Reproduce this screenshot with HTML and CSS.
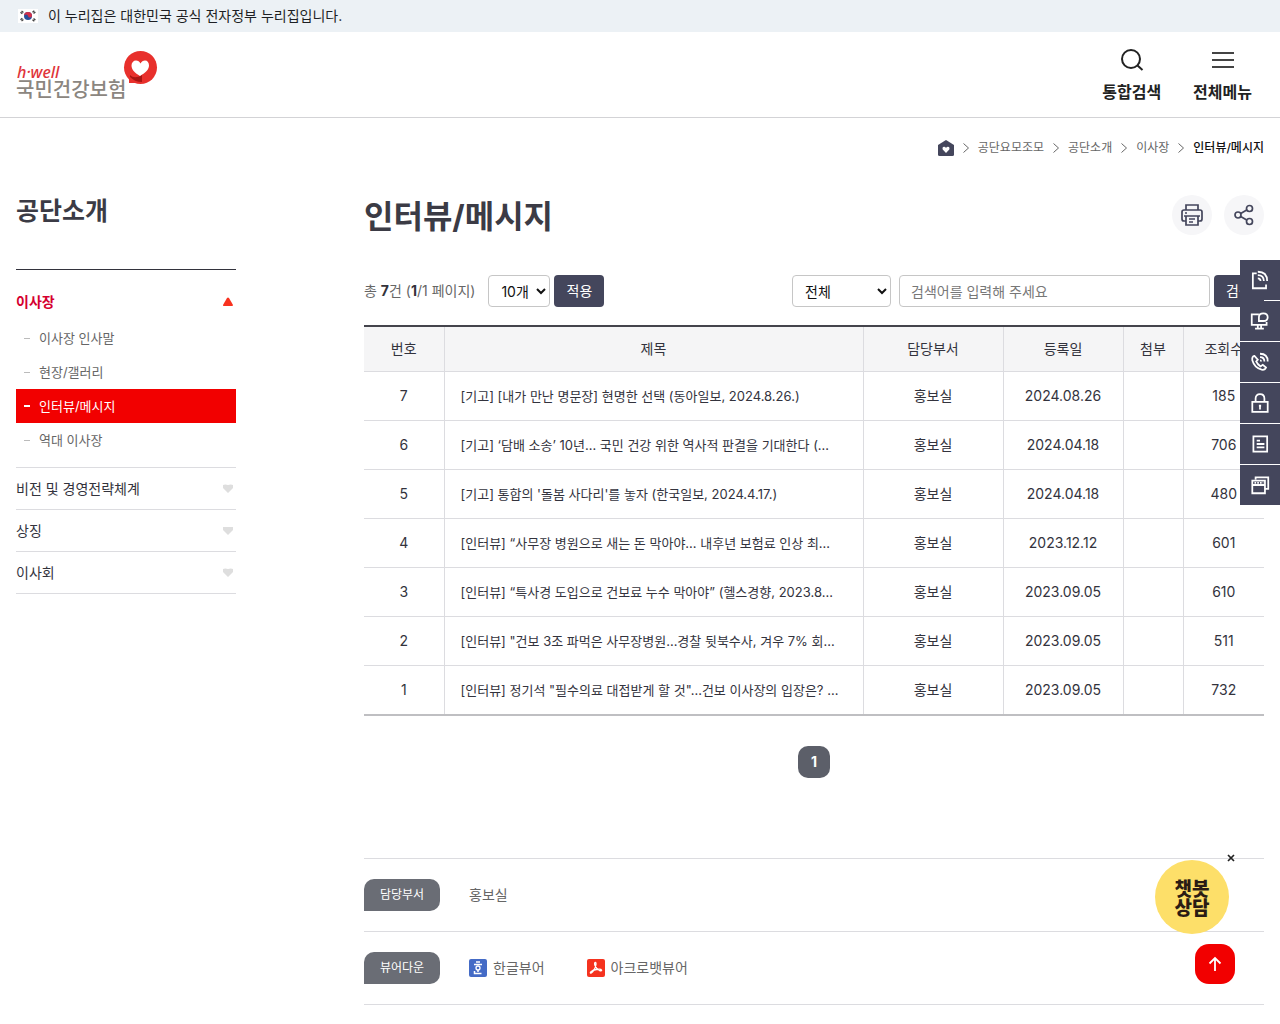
FILE: index.html
```html
<!DOCTYPE html>
<html lang="ko">
<head>
<meta charset="utf-8">
<meta name="viewport" content="width=device-width, initial-scale=1">
<title>인터뷰/메시지 | 국민건강보험</title>
<link rel="stylesheet" href="styles.css">
</head>
<body>
<div class="gov-banner">
  <svg class="flag" viewBox="0 0 20 14" aria-hidden="true">
    <rect width="20" height="14" fill="#fff"/>
    <circle cx="10" cy="7" r="4" fill="#27509b"/>
    <path d="M6 7a4 4 0 0 1 8 0q-.3 1.500-2 1.500T10 7 8 5.500 6 7Z" fill="#d2304a"/>
    <path d="M3 4.500 5 2M15 2l2 2.500M3 9.500 5 12M15 12l2-2.500" stroke="#444" stroke-width="2.400" stroke-dasharray="1.300 .4"/>
  </svg>
  <span>이 누리집은 대한민국 공식 전자정부 누리집입니다.</span>
</div>

<header class="site-header">
  <a class="logo" href="#" aria-label="국민건강보험 홈">
    <svg width="142" height="52" viewBox="0 0 142 52">
      <circle cx="124.500" cy="17.500" r="16.500" fill="#e8302c"/>
      <path d="M113 25v8h12Z" fill="#e8302c"/>
      <path d="M114 25c3 3 7 3 12 0v7c-5 0-9-2-12-5Z" fill="#a81512"/>
      <path d="M124 26c-5-3-8.500-6-8.500-10.500 0-3 2-5 4.500-5 2 0 3.500 1 4.500 3 1-2 2.500-3 4.500-3 2.500 0 4 2 4 5 0 4.500-4 7.500-9 10.500Z" fill="#fff"/>
      <text x="1" y="28" class="logo-en">h·well</text>
      <text x="0" y="47" class="logo-ko">국민건강보험</text>
    </svg>
  </a>
  <nav class="header-tools" aria-label="주요 도구">
    <button type="button" class="tool">
      <svg width="24" height="24" viewBox="0 0 24 24" fill="none" stroke="#222" stroke-width="2"><circle cx="11" cy="11" r="9"/><path d="m17.500 17.500 5 4.500"/></svg>
      <span>통합검색</span>
    </button>
    <button type="button" class="tool">
      <svg width="24" height="24" viewBox="0 0 24 24" stroke="#444" stroke-width="2"><path d="M1 5h22M1 12h22M1 19h22"/></svg>
      <span>전체메뉴</span>
    </button>
  </nav>
</header>

<nav class="breadcrumb" aria-label="현재 위치">
  <a href="#" aria-label="홈"><svg width="16" height="16" viewBox="0 0 16 16"><path d="M0 5 8 0l8 5v9.500q0 1.500-1.500 1.500h-13Q0 16 0 14.500Z" fill="#44465c"/><path d="M8 13 4.700 9.500Q4 7 6 6.700 7.400 6.700 8 8 8.600 6.700 10 6.700 12 7 11.300 9.500Z" fill="#fff"/></svg></a>
  <svg class="sep" viewBox="0 0 6 10"><path d="m.5.5 5 4.500-5 4.500"/></svg>
  <a href="#">공단요모조모</a>
  <svg class="sep" viewBox="0 0 6 10"><path d="m.5.5 5 4.500-5 4.500"/></svg>
  <a href="#">공단소개</a>
  <svg class="sep" viewBox="0 0 6 10"><path d="m.5.5 5 4.500-5 4.500"/></svg>
  <a href="#">이사장</a>
  <svg class="sep" viewBox="0 0 6 10"><path d="m.5.5 5 4.500-5 4.500"/></svg>
  <a href="#" class="current" aria-current="page">인터뷰/메시지</a>
</nav>

<div class="layout">
  <aside class="sidebar">
    <h2>공단소개</h2>
    <ul class="menu">
      <li class="open">
        <a class="menu-link" href="#">이사장 <svg width="12" height="10" viewBox="0 0 12 10"><path d="M5 1q1-1 2 0l4 7q0 1-1 1H2Q.500 9 1 8Z" fill="#f8321f"/></svg></a>
        <ul class="submenu">
          <li><a href="#">이사장 인사말</a></li>
          <li><a href="#">현장/갤러리</a></li>
          <li><a href="#" class="active">인터뷰/메시지</a></li>
          <li><a href="#">역대 이사장</a></li>
        </ul>
      </li>
      <li><a class="menu-link" href="#">비전 및 경영전략체계 <svg width="12" height="10" viewBox="0 0 12 10"><path d="M1 1q2-1 5 0 3-1 5 0v3L6 9 1 4Z" fill="#dedede"/></svg></a></li>
      <li><a class="menu-link" href="#">상징 <svg width="12" height="10" viewBox="0 0 12 10"><path d="M1 1h10v3L6 9 1 4Z" fill="#dedede"/></svg></a></li>
      <li><a class="menu-link" href="#">이사회 <svg width="12" height="10" viewBox="0 0 12 10"><path d="M1 1q2-1 5 0 3-1 5 0v3L6 9 1 4Z" fill="#dedede"/></svg></a></li>
    </ul>
  </aside>

  <main class="content">
    <div class="title-row">
      <h1>인터뷰/메시지</h1>
      <div class="page-tools">
        <button type="button" aria-label="인쇄"><svg width="24" height="24" viewBox="0 0 24 24" fill="none" stroke="#44465c" stroke-width="1.700"><path d="M6 7V2h12v5M6 18H4q-2 0-2-2V9q0-2 2-2h16q2 0 2 2v7q0 2-2 2h-2"/><path d="M4 13h16M6 13v9h12v-9M9 16h6M9 19h4M5 10h2"/></svg></button>
        <button type="button" aria-label="공유"><svg width="24" height="24" viewBox="0 0 24 24" fill="none" stroke="#44465c" stroke-width="1.700"><circle cx="6" cy="12" r="3"/><circle cx="17.500" cy="5.500" r="3"/><circle cx="17.500" cy="18.500" r="3"/><path d="m8.700 10.500 6-3.500M8.700 13.500l6 3.500"/></svg></button>
      </div>
    </div>

    <div class="list-bar">
      <form class="per-page">
        <p>총 <b>7</b>건 (<b>1</b>/1 페이지)</p>
        <select aria-label="목록 개수"><option>10개</option></select>
        <button type="button" class="btn">적용</button>
      </form>
      <form class="search">
        <select aria-label="검색 구분"><option>전체</option></select>
        <input type="text" aria-label="검색어" placeholder="검색어를 입력해 주세요">
        <button type="button" class="btn">검색</button>
      </form>
    </div>

    <table class="board">
      <colgroup><col class="c-num"><col><col class="c-dept"><col class="c-date"><col class="c-file"><col class="c-hits"></colgroup>
      <thead><tr><th>번호</th><th>제목</th><th>담당부서</th><th>등록일</th><th>첨부</th><th>조회수</th></tr></thead>
      <tbody>
        <tr><td>7</td><td><a href="#">[기고] [내가 만난 명문장] 현명한 선택 (동아일보, 2024.8.26.)</a></td><td>홍보실</td><td>2024.08.26</td><td></td><td>185</td></tr>
        <tr><td>6</td><td><a href="#">[기고] ‘담배 소송’ 10년… 국민 건강 위한 역사적 판결을 기대한다 (…</a></td><td>홍보실</td><td>2024.04.18</td><td></td><td>706</td></tr>
        <tr><td>5</td><td><a href="#">[기고] 통합의 '돌봄 사다리'를 놓자 (한국일보, 2024.4.17.)</a></td><td>홍보실</td><td>2024.04.18</td><td></td><td>480</td></tr>
        <tr><td>4</td><td><a href="#">[인터뷰] “사무장 병원으로 새는 돈 막아야… 내후년 보험료 인상 최…</a></td><td>홍보실</td><td>2023.12.12</td><td></td><td>601</td></tr>
        <tr><td>3</td><td><a href="#">[인터뷰] “특사경 도입으로 건보료 누수 막아야” (헬스경향, 2023.8…</a></td><td>홍보실</td><td>2023.09.05</td><td></td><td>610</td></tr>
        <tr><td>2</td><td><a href="#">[인터뷰] "건보 3조 파먹은 사무장병원…경찰 뒷북수사, 겨우 7% 회…</a></td><td>홍보실</td><td>2023.09.05</td><td></td><td>511</td></tr>
        <tr><td>1</td><td><a href="#">[인터뷰] 정기석 "필수의료 대접받게 할 것"…건보 이사장의 입장은? …</a></td><td>홍보실</td><td>2023.09.05</td><td></td><td>732</td></tr>
      </tbody>
    </table>

    <nav class="pagination" aria-label="페이지"><a href="#" aria-current="page">1</a></nav>

    <dl class="page-info">
      <div><dt>담당부서</dt><dd>홍보실</dd></div>
      <div>
        <dt>뷰어다운</dt>
        <dd>
          <a href="#"><svg width="18" height="18" viewBox="0 0 18 18"><rect width="18" height="18" rx="2" fill="#446bc6"/><path d="M7 3h4M5 5.500h8M9 11v2M5.500 12v2.500h7" fill="none" stroke="#fff" stroke-width="1.500"/><circle cx="9" cy="9" r="2" fill="none" stroke="#fff" stroke-width="1.300"/></svg>한글뷰어</a>
          <a href="#"><svg width="18" height="18" viewBox="0 0 18 18"><rect width="18" height="18" rx="2" fill="#f5331f"/><path d="M8.500 3.500q-1.500 0-.5 3 1.300 3.500 4.500 5 2.500.700 2-.500-.500-1.200-5-.500-3.500.5-5.500 2.200-1.300 1.600 0 1.300 1.800-.5 4-5Q9.800 3.800 8.500 3.500Z" fill="none" stroke="#fff" stroke-width="1.300"/></svg>아크로뱃뷰어</a>
        </dd>
      </div>
    </dl>
  </main>
</div>

<nav class="quick" aria-label="빠른 메뉴">
  <a href="#" aria-label="민원신청"><svg viewBox="0 0 20 20"><path d="M7 4H3.500v13.500h12V14"/><path d="M8 2.500q8.500 0 8.500 8.500M8 5.500q5.500 0 5.500 5.500M8 8.500q2.500 0 2.500 2.500"/></svg></a>
  <a href="#" aria-label="화상상담"><svg viewBox="0 0 20 20"><path d="M9 4H2.500v9.500H16V11M8 14v3M11 14v3M5.500 17h8"/><path d="M9 10V6.500Q9 3 13 3t4 3.500-4 3.500Z"/></svg></a>
  <a href="#" aria-label="전화상담"><svg viewBox="0 0 20 20"><path d="M5 4.500Q2.500 5 3 8.500q2 7 8.500 8.500 3 .5 4-2L12.500 12.500l-2 1.500Q7.500 12 6.500 9.500L8 8Z"/><path d="M10 2.500q7 0 7 7M10 5.500q4 0 4 4M10 8.500q1 0 1 1"/></svg></a>
  <a href="#" aria-label="인증센터"><svg viewBox="0 0 20 20"><path d="M3 9h14v9H3ZM6 9V6q0-4 4-4t4 4v3M10 12v4M9 12.500h2"/></svg></a>
  <a href="#" aria-label="서식자료"><svg viewBox="0 0 20 20"><path d="M4 3h12.500v14H4ZM7 7h3M7 10h7M7 13h7"/></svg></a>
  <a href="#" aria-label="관련사이트"><svg viewBox="0 0 20 20"><path d="M6 5V3h11.500v10.500H15M3 6h11.500v11.500H3ZM3 10h11.500"/><path d="M5 8h8" stroke-dasharray="1.500 1"/></svg></a>
</nav>

<div class="floating">
  <button type="button" class="chat-close" aria-label="챗봇 닫기"><svg width="8" height="8" viewBox="0 0 8 8"><path d="m1 1 6 6M7 1 1 7" stroke="#222" stroke-width="1.700"/></svg></button>
  <a class="chatbot" href="#">챗봇<br>상담</a>
  <a class="to-top" href="#" aria-label="맨 위로"><svg width="14" height="16" viewBox="0 0 14 16" fill="none" stroke="#fff" stroke-width="1.800"><path d="M7 15V2M1.500 7.500 7 2l5.500 5.500"/></svg></a>
</div>
</body>
</html>
```

FILE: styles.css
```css
* { box-sizing: border-box; }
body {
  margin: 0;
  background: #fff;
  color: #33333d;
  font: 14px/20px Inter, "Noto Sans CJK KR", sans-serif;
}
h1, h2, p, ul, dl, dd { margin: 0; padding: 0; }
ul { list-style: none; }
a { color: inherit; text-decoration: none; }
button, input, select { font: inherit; }
button { border: 0; cursor: pointer; }
svg { display: block; flex: none; }

.gov-banner {
  display: flex;
  align-items: center;
  gap: 10px;
  height: 32px;
  padding: 0 18px;
  background: #ecf1f5;
  color: #1d1f24;
}
.flag { width: 20px; height: 14px; }

.site-header {
  display: flex;
  justify-content: space-between;
  height: 86px;
  padding: 14px 28px 0 16px;
  border-bottom: 1px solid #d3d3d6;
}
.logo { margin-top: 4px; }
.logo-en { font: italic 500 16px "Noto Sans", sans-serif; fill: #e0343a; }
.logo-ko { font: 500 20px "Noto Sans CJK KR", sans-serif; fill: #8b8680; }
.header-tools { display: flex; gap: 32px; align-items: flex-start; }
.tool {
  display: flex;
  flex-direction: column;
  align-items: center;
  gap: 8px;
  padding: 2px 0;
  background: none;
  color: #222;
  font-size: 16px;
  line-height: 24px;
  font-weight: 700;
}

.breadcrumb {
  display: flex;
  justify-content: flex-end;
  align-items: center;
  gap: 9px;
  padding: 20px 16px 0;
  font-size: 12px;
  color: #666;
}
.sep { width: 6px; height: 10px; fill: none; stroke: #666; }
.current { color: #111; font-weight: 500; }

.layout { display: flex; gap: 128px; padding: 31px 16px 0; }
.sidebar { flex: 0 0 220px; }
.sidebar h2 {
  padding: 5px 0 41px;
  border-bottom: 1px solid #33333d;
  color: #3b3b45;
  font-size: 25px;
  line-height: 34px;
}
.menu > li { border-bottom: 1px solid #dcdce0; }
.menu-link {
  display: flex;
  justify-content: space-between;
  align-items: center;
  height: 41px;
  padding-right: 2px;
}
.open { padding: 12px 0 10px; }
.open .menu-link { height: 39px; color: #d5002f; font-weight: 700; }
.submenu a {
  display: flex;
  align-items: center;
  gap: 9px;
  height: 34px;
  padding-left: 8px;
  color: #666;
  font-size: 13px;
}
.submenu a::before { content: ""; width: 6px; height: 1px; background: #bbb; }
.submenu .active { background: #f20000; color: #fff; }
.submenu .active::before { height: 2px; background: #fff; }

.content { flex: 1; min-width: 0; }
.title-row { display: flex; justify-content: space-between; align-items: center; height: 52px; }
h1 { padding-top: 4px; color: #3b3b45; font-size: 32px; line-height: 48px; }
.page-tools { display: flex; gap: 12px; }
.page-tools button {
  display: grid;
  place-items: center;
  width: 40px;
  height: 40px;
  padding: 0;
  border-radius: 50%;
  background: #f6f6f8;
}

.list-bar { display: flex; justify-content: space-between; margin: 34px 0 18px; }
.per-page, .search { display: flex; align-items: center; gap: 4px; }
.per-page p { margin-right: 9px; color: #666; }
.per-page b { color: #33333b; }
select, input {
  height: 32px;
  border: 1px solid #c6c6c6;
  border-radius: 4px;
  background: #fff;
  color: #111;
}
select { width: 62px; padding-left: 8px; }
.search select { width: 99px; margin-right: 4px; }
.search input { width: 311px; padding: 0 11px; }
input::placeholder { color: #777; }
.btn { width: 50px; height: 32px; padding: 0; border-radius: 4px; background: #44465c; color: #fff; }

.board {
  width: 100%;
  table-layout: fixed;
  border-collapse: collapse;
  border-top: 2px solid #44444c;
  border-bottom: 2px solid #bfbfc2;
}
.c-num { width: 80px; }
.c-hits { width: 81px; }
.c-dept { width: 140px; }
.c-date { width: 120px; }
.c-file { width: 60px; }
.board th { height: 45px; background: #f5f5f6; font-weight: 400; }
.board td { height: 49px; }
.board tr:last-child td { height: 50px; }
.board th, .board td {
  padding: 0;
  border: 1px solid #dcdce0;
  border-width: 0 0 1px 1px;
  text-align: center;
  white-space: nowrap;
}
.board th:first-child, .board td:first-child { border-left: 0; }
.board td:nth-child(2) { padding-left: 16px; font-size: 13px; text-align: left; }

.pagination { display: flex; justify-content: center; padding: 30px 0 80px; }
.pagination a {
  display: grid;
  place-items: center;
  width: 32px;
  height: 32px;
  border-radius: 10px;
  background: #5c5f69;
  color: #fff;
  font-weight: 700;
}

.page-info { border-top: 1px solid #dcdce0; color: #666; }
.page-info > div {
  display: flex;
  align-items: center;
  gap: 29px;
  height: 73px;
  border-bottom: 1px solid #dcdce0;
}
.page-info dt {
  width: 76px;
  border-radius: 10px 10px 10px 0;
  background: #6a6d75;
  color: #fff;
  font-size: 12px;
  line-height: 32px;
  text-align: center;
}
.page-info dd { display: flex; gap: 42px; }
.page-info dd a { display: flex; align-items: center; gap: 6px; }

.quick { position: fixed; top: 260px; right: 0; width: 40px; background: #fff; }
.quick a {
  display: grid;
  place-items: center;
  height: 40px;
  margin-bottom: 1px;
  background: #44465c;
}
.quick a:last-child { margin-bottom: 0; }
.quick a:first-child { box-shadow: -16px 1px #44465c; clip-path: inset(0 0 -1px 0); }
.quick svg { width: 22px; height: 22px; fill: none; stroke: #fff; stroke-width: 1.6; }

.floating {
  position: fixed;
  right: 45px;
  bottom: 40px;
  display: flex;
  flex-direction: column;
  align-items: flex-end;
}
.chat-close { padding: 0; background: none; }
.chatbot {
  display: grid;
  place-items: center;
  align-content: center;
  width: 74px;
  height: 74px;
  margin: -2px 6px 10px 0;
  border-radius: 50%;
  background: #fddf69;
  color: #2b1c14;
  font: 900 19px/19px "Noto Sans CJK KR", sans-serif;
}
.to-top {
  display: grid;
  place-items: center;
  width: 40px;
  height: 40px;
  border-radius: 14px;
  background: #f20000;
}
```
